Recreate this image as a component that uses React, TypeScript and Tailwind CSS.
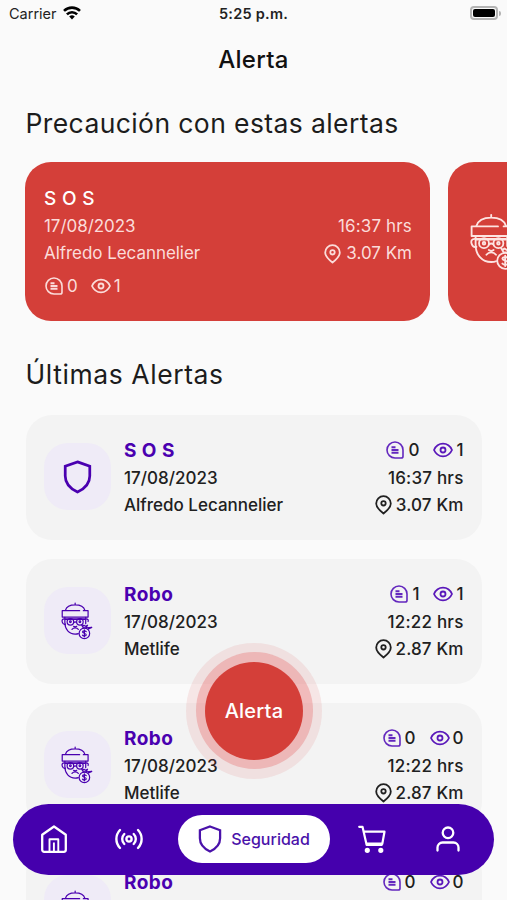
import type { ReactNode } from "react";

type AlertItem = {
  id: number;
  kind: "sos" | "robo";
  title: string;
  date: string;
  place: string;
  time: string;
  distance: string;
  comments: number;
  views: number;
};

const ALERTS: AlertItem[] = [
  { id: 1, kind: "sos", title: "S O S", date: "17/08/2023", place: "Alfredo Lecannelier", time: "16:37 hrs", distance: "3.07 Km", comments: 0, views: 1 },
  { id: 2, kind: "robo", title: "Robo", date: "17/08/2023", place: "Metlife", time: "12:22 hrs", distance: "2.87 Km", comments: 1, views: 1 },
  { id: 3, kind: "robo", title: "Robo", date: "17/08/2023", place: "Metlife", time: "12:22 hrs", distance: "2.87 Km", comments: 0, views: 0 },
  { id: 4, kind: "robo", title: "Robo", date: "17/08/2023", place: "Metlife", time: "12:22 hrs", distance: "2.87 Km", comments: 0, views: 0 },
];

type IconProps = { className?: string };

function CommentIcon({ className }: IconProps) {
  return (
    <svg viewBox="0 0 18 18" fill="none" stroke="currentColor" className={className}>
      <path d="M9 1a8 8 0 1 0 0 16h6.200a1.800 1.800 0 0 0 1.800-1.800V9a8 8 0 0 0-8-8Z" strokeWidth="1.600" />
      <path d="M5.500 6.300h4M5.500 9h7M5.500 11.700h7" strokeWidth="2" />
    </svg>
  );
}

function EyeIcon({ className }: IconProps) {
  return (
    <svg viewBox="0 0 20 16" fill="none" stroke="currentColor" strokeWidth="1.800" className={className}>
      <path d="M1 8c1.900-4.200 5.100-6.300 9-6.300S17.100 3.800 19 8c-1.900 4.200-5.100 6.300-9 6.300S2.900 12.200 1 8Z" strokeLinejoin="round" />
      <circle cx="10" cy="8" r="2.500" />
    </svg>
  );
}

function PinIcon({ className }: IconProps) {
  return (
    <svg viewBox="0 0 17 20" fill="none" stroke="currentColor" strokeWidth="1.800" strokeLinejoin="round" className={className}>
      <path d="M8.500 18.500C4 15 1.200 12 1.200 8.500a7.300 7.300 0 0 1 14.600 0c0 3.500-2.800 6.500-7.300 10Z" />
      <circle cx="8.500" cy="8.300" r="2.200" />
    </svg>
  );
}

function ShieldIcon({ className }: IconProps) {
  return (
    <svg viewBox="0 0 30 36" fill="none" stroke="currentColor" strokeWidth="2.900" strokeLinejoin="miter" className={className}>
      <path d="M15 2 28 6.700V17c0 8-5 13.300-13 17C7 30.300 2 25 2 17V6.700L15 2Z" />
    </svg>
  );
}

function ThiefIcon({ className }: IconProps) {
  return (
    <svg viewBox="0 0 60 72" fill="none" stroke="currentColor" strokeWidth="2.300" strokeLinecap="round" strokeLinejoin="round" className={className}>
      <path d="M26.500 2v3M8 16C10 9 17 5.500 26.500 5.500S43 9 45 16" />
      <path d="M35 16.500H2v12h49v-12h-9" />
      <path d="M6 32c-4 0-5 3-4 6s3 5 6 4M47 32c4 0 5 2 4 5" />
      <path d="M7 29v10c0 13 8 22 19.500 22 2 0 4 0 6-1M46.500 29v12" />
      <path d="M8 32.500h37" strokeWidth="3" />
      <path d="M24 39c1.500-1.500 3.500-1.500 5 0" />
      <circle cx="17.500" cy="37.500" r="6.200" />
      <circle cx="35.500" cy="37.500" r="6.200" />
      <circle cx="17.500" cy="37.500" r="1.600" />
      <circle cx="35.500" cy="37.500" r="1.600" />
      <path d="M23.500 46c2 1.500 4 1.500 6 0M20.500 52c3-4 9-4 12 0" />
      <circle cx="44" cy="59.500" r="10" />
      <path d="m39 44 3 5h5l3-5-4 2-3-2-2 2ZM48 49l10-1-6 3" />
      <path d="M47.500 56c-2-2-7-1.500-7 1s7 2 7 5-5 3-7 1M44 53v13" />
    </svg>
  );
}

function WifiIcon({ className }: IconProps) {
  return (
    <svg viewBox="0 0 18 14" fill="none" stroke="currentColor" strokeWidth="2.600" className={className}>
      <path d="M1 4.900a11.500 11.500 0 0 1 16 0M3.900 8.300a7.200 7.200 0 0 1 10.200 0" />
      <path d="m9 13.600-2.800-3a4 4 0 0 1 5.600 0Z" fill="currentColor" stroke="none" />
    </svg>
  );
}

function HomeIcon() {
  return (
    <svg viewBox="0 0 26 28" fill="none" stroke="currentColor" strokeWidth="2.300" strokeLinejoin="round" className="h-7 w-[26px]">
      <path d="M1.200 9.700 13 1.500l11.800 8.200v15.100a2 2 0 0 1-2 2H3.200a2 2 0 0 1-2-2Z" />
      <path d="M8.500 26.500V14.200h8.800v12.300M12.900 17.500v8.500" strokeWidth="1.900" />
    </svg>
  );
}

function SignalIcon() {
  return (
    <svg viewBox="0 0 28 22" fill="none" stroke="currentColor" strokeWidth="2.400" strokeLinecap="round" className="h-[22px] w-7">
      <circle cx="14" cy="11" r="2.600" />
      <path d="M9.300 6a7 7 0 0 0 0 10M18.700 6a7 7 0 0 1 0 10M5 2a13 13 0 0 0 0 18M23 2a13 13 0 0 1 0 18" />
    </svg>
  );
}

function CartIcon() {
  return (
    <svg viewBox="0 0 28 28" fill="none" stroke="currentColor" strokeWidth="2.200" strokeLinecap="round" strokeLinejoin="round" className="size-7">
      <path d="M1.200 1.800h3.300l4.100 18h15.200M5.700 6.700h20.800l-2.200 12H8.400" />
      <circle cx="9.300" cy="25.300" r="1.500" fill="currentColor" />
      <circle cx="22.800" cy="25.300" r="1.500" fill="currentColor" />
    </svg>
  );
}

function UserIcon() {
  return (
    <svg viewBox="0 0 24 26" fill="none" stroke="currentColor" strokeWidth="2.300" strokeLinecap="round" className="h-[26px] w-6">
      <circle cx="12" cy="6.800" r="5.300" />
      <path d="M1.500 24.500v-3a5 5 0 0 1 5-5h11a5 5 0 0 1 5 5v3" />
    </svg>
  );
}

function StatusBar() {
  return (
    <div className="grid h-7 grid-cols-3 items-center pl-[9px] pr-[6px] text-[14.500px] text-[#222]">
      <div className="flex items-center gap-[6px]">
        <span>Carrier</span>
        <WifiIcon className="-mt-[2px] h-[14px] w-[18px] text-black" />
      </div>
      <span className="-ml-[3px] text-center font-semibold tracking-[0.250px]">5:25 p.m.</span>
      <div className="flex items-center justify-end gap-px pb-[2px]">
        <span className="flex h-[14px] w-[28px] rounded-[4px] border-2 border-[#b4b4b4] p-px">
          <span className="flex-1 rounded-[2px] bg-black" />
        </span>
        <span className="h-[5px] w-[2px] rounded-r-full bg-[#b4b4b4]" />
      </div>
    </div>
  );
}

function FeaturedCard({ item }: { item: AlertItem }) {
  return (
    <article className="h-[159px] w-[405px] shrink-0 rounded-[26px] bg-[#d43f39] pl-[19px] pr-[18px] pt-[23px] text-[17px] text-[#fbdcda]">
      <h3 className="h-7 text-[19px] font-medium leading-7 tracking-[0.300px] text-white">{item.title}</h3>
      <div className="flex h-7 items-center justify-between">
        <span className="tracking-[-0.050px]">{item.date}</span>
        <span className="tracking-[0.150px]">{item.time}</span>
      </div>
      <div className="flex h-[26px] items-center justify-between">
        <span className="tracking-[-0.050px]">{item.place}</span>
        <span className="flex items-center gap-[5px]">
          <PinIcon className="-mt-px h-5 w-[17px]" />
          {item.distance}
        </span>
      </div>
      <div className="mt-[7px] flex h-[26px] items-center gap-[13px]">
        <span className="flex items-center gap-1">
          <CommentIcon className="-mt-[2px] ml-px size-[18px]" />
          {item.comments}
        </span>
        <span className="flex items-center gap-[3px]">
          <EyeIcon className="-mt-[2px] h-4 w-5" />
          {item.views}
        </span>
      </div>
    </article>
  );
}

function AlertCard({ item }: { item: AlertItem }) {
  return (
    <article className="flex h-[125px] shrink-0 rounded-[26px] bg-[#f3f3f3] pl-[18px] pr-[18.500px] pt-[22px]">
      <div className="mt-[6px] flex size-[67px] shrink-0 items-center justify-center rounded-[24px] bg-[#efebf7] text-[#4a00b0]">
        {item.kind === "sos" ? <ShieldIcon className="h-[34px] w-[29px]" /> : <ThiefIcon className="mt-px h-[38px] w-8" />}
      </div>
      <div className="ml-[13.500px] flex-1 text-[17px] font-medium text-[#202020]">
        <div className="flex h-7 items-center justify-between">
          <h3 className="text-[19px] font-bold tracking-[0.450px] text-[#4a00b0]">{item.title}</h3>
          <div className="flex items-center gap-[14px]">
            <span className="flex items-center gap-1">
              <CommentIcon className="-mt-[2px] size-[18px] text-[#6327be]" />
              {item.comments}
            </span>
            <span className="flex items-center gap-[3px]">
              <EyeIcon className="-mt-[2px] h-4 w-5 text-[#5a18ba]" />
              {item.views}
            </span>
          </div>
        </div>
        <div className="flex h-7 items-center justify-between">
          <span>{item.date}</span>
          <span className="tracking-[0.200px]">{item.time}</span>
        </div>
        <div className="flex h-[26px] items-center justify-between">
          <span>{item.place}</span>
          <span className="flex items-center gap-[4px] tracking-[0.150px]">
            <PinIcon className="-mt-[2px] h-5 w-[17px]" />
            {item.distance}
          </span>
        </div>
      </div>
    </article>
  );
}

function NavButton({ label, children }: { label: string; children: ReactNode }) {
  return (
    <button type="button" aria-label={label} className="flex w-[75px] items-center justify-center text-white">
      {children}
    </button>
  );
}

function BottomNav() {
  return (
    <nav className="absolute bottom-[25px] left-[13px] flex h-[71px] w-[481px] items-center justify-between rounded-full bg-[#4500ad] pb-px pl-[3px] pr-[9px]">
      <NavButton label="Inicio">
        <HomeIcon />
      </NavButton>
      <NavButton label="Transmisiones">
        <SignalIcon />
      </NavButton>
      <button type="button" className="ml-[11px] mr-[4px] flex h-12 w-[152px] items-center justify-center gap-[9px] rounded-full bg-white text-[16px] font-medium text-[#4a12aa]">
        <ShieldIcon className="h-7 w-6" />
        Seguridad
      </button>
      <NavButton label="Tienda">
        <CartIcon />
      </NavButton>
      <NavButton label="Perfil">
        <UserIcon />
      </NavButton>
    </nav>
  );
}

export default function App() {
  return (
    <main className="relative h-[900px] w-[507px] overflow-hidden bg-[#fafafa] font-['Inter','Liberation_Sans',sans-serif]">
      <StatusBar />
      <h1 className="mt-[14px] h-9 text-center text-[24px] font-medium leading-9 tracking-[0.300px] text-[#111]">Alerta</h1>

      <h2 className="ml-[25.500px] mt-[27px] h-9 whitespace-nowrap text-[26.500px] leading-9 tracking-[0.400px] text-[#1c1c1c]">
        Precaución con estas alertas
      </h2>
      <div className="mt-[21px] flex gap-[18px] overflow-hidden pl-[25px]">
        <FeaturedCard item={ALERTS[0]} />
        <article className="h-[159px] w-[405px] shrink-0 rounded-[26px] bg-[#d43f39] pl-[22px] pt-[51px] text-[#fde4e2]">
          <ThiefIcon className="h-[58px] w-12" />
        </article>
      </div>

      <h2 className="ml-[25.500px] mt-[35px] h-9 text-[26.500px] leading-9 tracking-[0.580px] text-[#1c1c1c]">Últimas Alertas</h2>
      <div className="mt-[23px] flex flex-col gap-[19px] pl-[25.500px] pr-[25px]">
        {ALERTS.map((item) => (
          <AlertCard key={item.id} item={item} />
        ))}
      </div>

      <button
        type="button"
        className="absolute left-[186px] top-[642.500px] flex size-[136px] items-center justify-center rounded-full bg-[#d43f39]/10"
      >
        <span className="flex size-[117px] items-center justify-center rounded-full bg-[#e23b3b]/25">
          <span className="flex size-[98px] items-center justify-center rounded-full bg-[#d43f39] text-[20px] font-medium tracking-[0.200px] text-white">Alerta</span>
        </span>
      </button>

      <BottomNav />
    </main>
  );
}
